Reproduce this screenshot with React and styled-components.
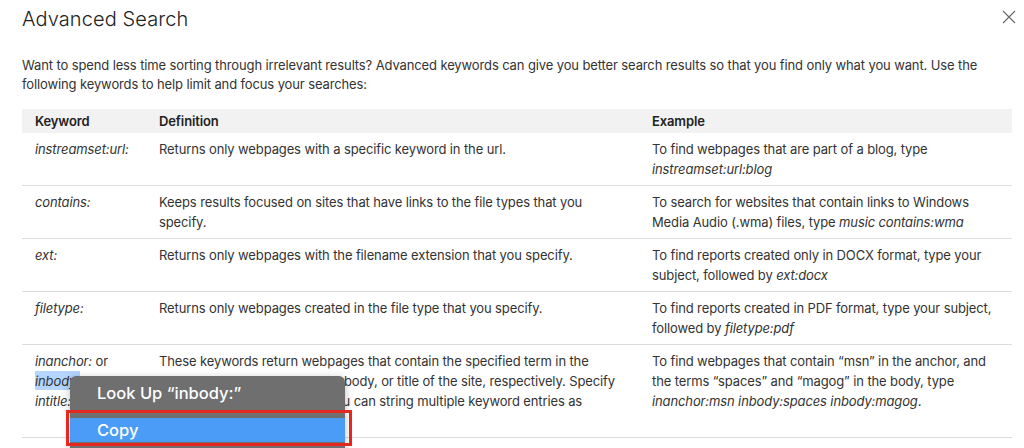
import styled, { createGlobalStyle } from "styled-components";

const GlobalStyle = createGlobalStyle`
  body {
    margin: 0;
    background: #fff;
    font-family: "Inter", "Liberation Sans", sans-serif;
    color: #333;
    overflow: hidden;
  }
`;

const Page = styled.div`
  position: relative;
  width: 1024px;
  height: 448px;
  padding: 0 8px 0 22px;
  box-sizing: border-box;
  letter-spacing: -0.12px;
`;

const Header = styled.div`
  height: 38px;
  display: flex;
  justify-content: space-between;
  align-items: center;
`;

const Title = styled.h1`
  margin: 0;
  font-size: 20px;
  font-weight: 300;
  color: #222;
  letter-spacing: 0.1px;
`;

const Close = styled.button`
  border: 0;
  background: none;
  padding: 0;
  width: 14px;
  height: 14px;
  margin-top: -4px;
  cursor: pointer;
`;

const Intro = styled.p`
  margin: 18px 0 0;
  font-size: 13px;
  line-height: 19px;
  color: #333;
  width: 975px;
`;

const Table = styled.div`
  margin-top: 15px;
  width: 990px;
  font-size: 13px;
  line-height: 20px;
`;

const Row = styled.div`
  display: grid;
  grid-template-columns: 124px 493px 1fr;
  background: ${(p) => (p.$head ? "#f2f2f2" : "transparent")};
  border-bottom: ${(p) => (p.$head ? "none" : "1px solid #dcdcdc")};
  min-height: ${(p) => (p.$head ? "24px" : "auto")};
`;

const Cell = styled.div`
  padding: ${(p) => (p.$head ? "2px 10px 2px 13px" : "6px 10px 6px 13px")};
  font-weight: ${(p) => (p.$head ? 600 : 400)};
  color: ${(p) => (p.$head ? "#222" : "#333")};
`;

const Key = styled.em`
  font-style: italic;
`;

const Selected = styled.span`
  background: #b4d5fe;
  padding: 2px 0 1px;
`;

const Menu = styled.div`
  position: absolute;
  left: 70px;
  top: 376px;
  width: 275px;
  height: 90px;
  background: #6f6f6f;
  border-radius: 6px;
  box-shadow: 0 2px 8px rgba(0, 0, 0, 0.25);
  padding-top: 5px;
  box-sizing: border-box;
  font-family: "Inter", "Liberation Sans", sans-serif;
  font-size: 16.5px;
  font-weight: 500;
  letter-spacing: 0;
  color: #fff;
`;

const MenuItem = styled.div`
  height: 24px;
  line-height: 24px;
  padding-left: 27px;
  background: ${(p) => (p.$active ? "#4b9cf6" : "transparent")};
`;

const Separator = styled.div`
  height: 1px;
  background: #5c5c5c;
  margin: 7px 0 5px;
`;

const Highlight = styled.div`
  position: absolute;
  left: 66px;
  top: 410px;
  width: 286px;
  height: 36px;
  border: 3px solid #e3281f;
  box-sizing: border-box;
  pointer-events: none;
`;

const rows = [
  {
    key: <Key>instreamset:url:</Key>,
    def: "Returns only webpages with a specific keyword in the url.",
    ex: (
      <>
        To find webpages that are part of a blog, type <Key>instreamset:url:blog</Key>
      </>
    ),
  },
  {
    key: <Key>contains:</Key>,
    def: "Keeps results focused on sites that have links to the file types that you specify.",
    ex: (
      <>
        To search for websites that contain links to Windows Media Audio (.wma) files, type{" "}
        <Key>music contains:wma</Key>
      </>
    ),
  },
  {
    key: <Key>ext:</Key>,
    def: "Returns only webpages with the filename extension that you specify.",
    ex: (
      <>
        To find reports created only in DOCX format, type your subject, followed by{" "}
        <Key>ext:docx</Key>
      </>
    ),
  },
  {
    key: <Key>filetype:</Key>,
    def: "Returns only webpages created in the file type that you specify.",
    ex: (
      <>
        To find reports created in PDF format, type your subject, followed by{" "}
        <Key>filetype:pdf</Key>
      </>
    ),
  },
  {
    key: (
      <>
        <Key>inanchor:</Key> or
        <br />
        <Selected>
          <Key>inbody:</Key>
        </Selected>{" "}
        or
        <br />
        <Key>intitle:</Key>
      </>
    ),
    def: "These keywords return webpages that contain the specified term in the metadata, such as the anchor, body, or title of the site, respectively. Specify only one keyword per term; you can string multiple keyword entries as needed.",
    ex: (
      <>
        To find webpages that contain “msn” in the anchor, and the terms “spaces” and “magog” in the
        body, type <Key>inanchor:msn inbody:spaces inbody:magog</Key>.
      </>
    ),
  },
];

function App() {
  return (
    <Page>
      <GlobalStyle />
      <Header>
        <Title>Advanced Search</Title>
        <Close aria-label="Close">
          <svg width="14" height="14" viewBox="0 0 14 14">
            <path d="M1 1L13 13M13 1L1 13" stroke="#666" strokeWidth="1.1" fill="none" />
          </svg>
        </Close>
      </Header>
      <Intro>
        Want to spend less time sorting through irrelevant results? Advanced keywords can give you
        better search results so that you find only what you want. Use the following keywords to
        help limit and focus your searches:
      </Intro>
      <Table>
        <Row $head>
          <Cell $head>Keyword</Cell>
          <Cell $head>Definition</Cell>
          <Cell $head>Example</Cell>
        </Row>
        {rows.map((r, i) => (
          <Row key={i}>
            <Cell>{r.key}</Cell>
            <Cell>{r.def}</Cell>
            <Cell>{r.ex}</Cell>
          </Row>
        ))}
      </Table>
      <Menu>
        <MenuItem>Look Up “inbody:”</MenuItem>
        <Separator />
        <MenuItem $active>Copy</MenuItem>
        <MenuItem>Search with Google</MenuItem>
      </Menu>
      <Highlight />
    </Page>
  );
}

export default App;
